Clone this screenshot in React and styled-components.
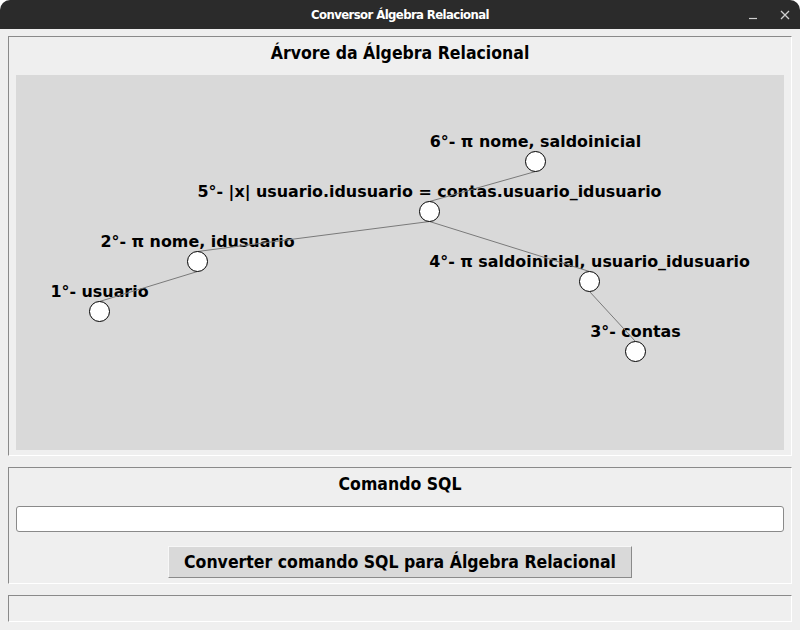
import React from "react";
import styled, { createGlobalStyle } from "styled-components";

const GlobalStyle = createGlobalStyle`
  html, body {
    margin: 0;
    padding: 0;
    background: #ffffff;
  }
  * {
    box-sizing: border-box;
  }
`;

const Window = styled.div`
  width: 800px;
  height: 630px;
  display: flex;
  flex-direction: column;
  background: #efefef;
  border-radius: 10px 10px 0 0;
  overflow: hidden;
`;

const TitleBar = styled.div`
  height: 29px;
  flex: none;
  background: #2b2b2b;
  display: flex;
  align-items: center;
  justify-content: center;
  position: relative;
`;

const TitleText = styled.span`
  color: #ffffff;
  font-family: "DejaVu Sans Condensed", "DejaVu Sans", sans-serif;
  font-weight: bold;
  font-size: 13px;
  letter-spacing: -0.6px;
`;

const WindowButtons = styled.div`
  position: absolute;
  right: 10px;
  top: 0;
  height: 29px;
  display: flex;
  align-items: center;
  gap: 22px;
`;

const Body = styled.div`
  flex: 1;
  display: flex;
  flex-direction: column;
  gap: 11px;
  padding: 7px 8px 6px 8px;
`;

const Panel = styled.section`
  border-style: solid;
  border-width: 1px;
  border-color: #8a8a8a #ffffff #ffffff #8a8a8a;
  display: flex;
  flex-direction: column;
  align-items: stretch;
  padding: 0 7px;
  height: ${(p) => p.$h}px;
  flex: none;
`;

const Heading = styled.h2`
  margin: 0;
  height: 38px;
  padding-bottom: 7px;
  display: flex;
  align-items: center;
  justify-content: center;
  font-family: "DejaVu Sans Condensed", "DejaVu Sans", sans-serif;
  font-weight: bold;
  font-size: 17.5px;
  color: #000;
`;

const Canvas = styled.div`
  height: 375px;
  background: #d9d9d9;
`;

const TreeSvg = styled.svg`
  display: block;
  width: 768px;
  height: 375px;
  font-family: "DejaVu Sans", sans-serif;
  font-weight: bold;
  font-size: 15.9px;
`;

const SqlInput = styled.input`
  height: 26px;
  flex: none;
  border: 1px solid #8a8a8a;
  border-radius: 3px;
  background: #ffffff;
  outline: none;
  font-family: "DejaVu Sans", sans-serif;
  font-size: 14px;
  padding: 0 4px;
`;

const ButtonRow = styled.div`
  display: flex;
  justify-content: center;
  padding-top: 14px;
`;

const ConvertButton = styled.button`
  width: 464px;
  height: 32px;
  background: #d9d9d9;
  border-style: solid;
  border-width: 1px;
  border-color: #f7f7f7 #8a8a8a #8a8a8a #f7f7f7;
  font-family: "DejaVu Sans Condensed", "DejaVu Sans", sans-serif;
  font-weight: bold;
  font-size: 17.5px;
  color: #000;
  padding: 0;
  cursor: pointer;
`;

const nodes = {
  n1: { x: 83.5, y: 236.5, label: "1°- usuario" },
  n2: { x: 181.5, y: 186.5, label: "2°- π nome, idusuario" },
  n3: { x: 619.5, y: 276.5, label: "3°- contas" },
  n4: { x: 573.5, y: 206.5, label: "4°- π saldoinicial, usuario_idusuario" },
  n5: { x: 413.5, y: 136.5, label: "5°- |x| usuario.idusuario = contas.usuario_idusuario" },
  n6: { x: 519.5, y: 86.5, label: "6°- π nome, saldoinicial" },
};

const edges = [
  ["n6", "n5"],
  ["n5", "n2"],
  ["n5", "n4"],
  ["n2", "n1"],
  ["n4", "n3"],
];

function Tree() {
  const list = Object.values(nodes);
  return (
    <TreeSvg viewBox="0 0 768 375">
      {list.map((n) => (
        <text key={n.label} x={n.x} y={n.y - 15} textAnchor="middle" fill="#000">
          {n.label}
        </text>
      ))}
      {edges.map(([a, b]) => (
        <line
          key={a + b}
          x1={nodes[a].x}
          y1={nodes[a].y + 10}
          x2={nodes[b].x}
          y2={nodes[b].y - 10}
          stroke="#7a7a7a"
          strokeWidth="1"
        />
      ))}
      {list.map((n) => (
        <circle key={n.label + "c"} cx={n.x} cy={n.y} r="10" fill="#fff" stroke="#000" strokeWidth="1" />
      ))}
    </TreeSvg>
  );
}

export default function App() {
  return (
    <>
      <GlobalStyle />
      <Window>
        <TitleBar>
          <TitleText>Conversor Álgebra Relacional</TitleText>
          <WindowButtons>
            <svg width="10" height="10" viewBox="0 0 10 10">
              <line x1="1" y1="8.5" x2="9" y2="8.5" stroke="#cfcfcf" strokeWidth="1.2" />
            </svg>
            <svg width="10" height="10" viewBox="0 0 10 10">
              <path d="M1 1 L9 9 M9 1 L1 9" stroke="#cfcfcf" strokeWidth="1.3" />
            </svg>
          </WindowButtons>
        </TitleBar>
        <Body>
          <Panel $h={420}>
            <Heading>Árvore da Álgebra Relacional</Heading>
            <Canvas>
              <Tree />
            </Canvas>
          </Panel>
          <Panel $h={117}>
            <Heading>Comando SQL</Heading>
            <SqlInput type="text" />
            <ButtonRow>
              <ConvertButton>Converter comando SQL para Álgebra Relacional</ConvertButton>
            </ButtonRow>
          </Panel>
          <Panel $h={27} />
        </Body>
      </Window>
    </>
  );
}
